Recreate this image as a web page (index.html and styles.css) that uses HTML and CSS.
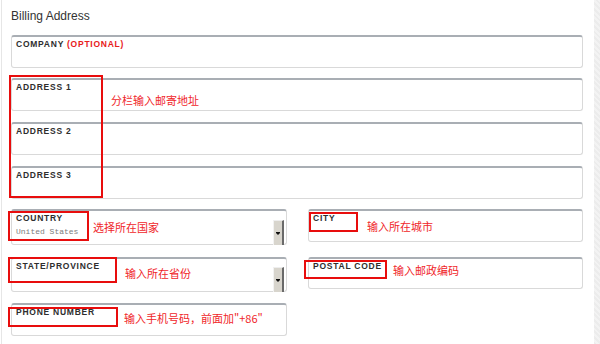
FILE: index.html
```html
<!DOCTYPE html>
<html lang="zh-CN">
<head>
    <meta charset="UTF-8">
    <title>Billing Address</title>
    <link rel="stylesheet" href="styles.css">
</head>
<body>
    <div class="page">
        <div class="main">
            <h3 class="title">Billing Address</h3>

            <div class="field wide company">
                <span class="label">Company <em>(Optional)</em></span>
            </div>

            <!-- 地址三栏 -->
            <div class="address-group">
                <div class="field wide"><span class="label">Address 1</span></div>
                <div class="field wide"><span class="label">Address 2</span></div>
                <div class="field wide"><span class="label">Address 3</span></div>
                <div class="mark mark-address"></div>
                <span class="note note-address">分栏输入邮寄地址</span>
            </div>

            <div class="pair first">
                <div class="field select country">
                    <div class="label-col">
                        <span class="label">Country</span>
                        <span class="value">United States</span>
                    </div>
                    <div class="select-btn"><i></i></div>
                    <div class="mark mark-country"></div>
                    <span class="note note-country">选择所在国家</span>
                </div>
                <div class="field city">
                    <span class="label">City</span>
                    <div class="mark mark-city"></div>
                    <span class="note note-city">输入所在城市</span>
                </div>
            </div>

            <div class="pair">
                <div class="field select state">
                    <div class="label-col">
                        <span class="label">State/Province</span>
                    </div>
                    <div class="select-btn"><i></i></div>
                    <div class="mark mark-state"></div>
                    <span class="note note-state">输入所在省份</span>
                </div>
                <div class="field postal">
                    <span class="label">Postal Code</span>
                    <div class="mark mark-postal"></div>
                    <span class="note note-postal">输入邮政编码</span>
                </div>
            </div>

            <div class="pair">
                <div class="field phone">
                    <span class="label">Phone Number</span>
                    <div class="mark mark-phone"></div>
                    <span class="note note-phone">输入手机号码，前面加"+86"</span>
                </div>
            </div>
        </div>
        <div class="strip"></div>
    </div>
</body>
</html>
```

FILE: styles.css
```css
body {
    margin: 0;
    background: #fff;
    font-family: "Liberation Sans", Arial, sans-serif;
    color: #333;
}

.page {
    display: flex;
    height: 344px;
    overflow: hidden;
}

.main {
    margin-left: 1px;
    border-left: 1px solid #e6e6e6;
    padding: 0 11px 0 9px;
    width: 572px;
}

.strip {
    width: 6px;
    background: repeating-linear-gradient(45deg, #ececec 0 2px, #f3f3f3 2px 4px);
}

.title {
    margin: 0;
    padding-top: 9px;
    font-size: 12px;
    line-height: 14px;
    font-weight: normal;
    color: #333;
}

/* Mezők */
.field {
    position: relative;
    box-sizing: border-box;
    height: 33px;
    border: 1px solid #d9d9d9;
    border-top: 2px solid #a9aeb4;
    border-radius: 3px;
    padding: 2px 4px 0;
}

.company {
    margin-top: 12px;
}

.label {
    display: block;
    font-size: 8.5px;
    line-height: 10px;
    font-weight: bold;
    letter-spacing: 0.75px;
    text-transform: uppercase;
    color: #2e2e2e;
}

.label em {
    font-style: normal;
    color: #e8201a;
}

.address-group {
    position: relative;
    margin-top: 10px;
    display: flex;
    flex-direction: column;
    gap: 11px;
}

.pair {
    display: grid;
    grid-template-columns: 276px 275px;
    column-gap: 21px;
    align-items: start;
    margin-top: 12px;
}

.pair.first {
    margin-top: 10px;
}

.country {
    height: 36px;
}

.state {
    height: 35px;
}

.postal {
    height: 32px;
}

.phone {
    margin-top: -1px;
}

.select {
    display: flex;
    padding-right: 2px;
}

.label-col {
    flex: 1;
}

.value {
    display: block;
    margin-top: 4px;
    font-family: "Liberation Mono", "Courier New", monospace;
    font-size: 8px;
    line-height: 10px;
    color: #7c7c7c;
}

.select-btn {
    align-self: flex-end;
    box-sizing: border-box;
    width: 11px;
    height: 25px;
    margin-bottom: -1px;
    background: #d8d5cd;
    border-left: 1px solid #f2f2f2;
    border-top: 1px solid #eeeeee;
    border-right: 2px solid #6a6a6a;
    display: flex;
    align-items: center;
    justify-content: center;
}

.select-btn i {
    width: 0;
    height: 0;
    margin-top: 2px;
    border-left: 2px solid transparent;
    border-right: 2px solid transparent;
    border-top: 2px solid #111;
    box-shadow: 0 -1px 0 #111;
}

/* Piros jelölések */
.mark {
    position: absolute;
    box-sizing: border-box;
    border: 2px solid #e80d0d;
}

.note {
    position: absolute;
    white-space: nowrap;
    font-family: "Noto Sans CJK SC", sans-serif;
    font-size: 11px;
    line-height: 13px;
    color: #f0262a;
}

.mark-address { left: -2px; top: -3px; width: 94px; height: 123px; }
.note-address { left: 100px; top: 16px; }

.mark-country { left: -4px; top: 0; width: 81px; height: 30px; }
.note-country { left: 81px; top: 10px; }

.mark-city { left: 0; top: 1px; width: 49px; height: 20px; }
.note-city { left: 58px; top: 9px; }

.mark-state { left: -4px; top: -2px; width: 109px; height: 26px; }
.note-state { left: 113px; top: 8px; }

.mark-postal { left: -5px; top: 1px; width: 83px; height: 19px; }
.note-postal { left: 84px; top: 5px; }

.mark-phone { left: -4px; top: 2px; width: 110px; height: 20px; }
.note-phone { left: 112px; top: 7px; }
```
